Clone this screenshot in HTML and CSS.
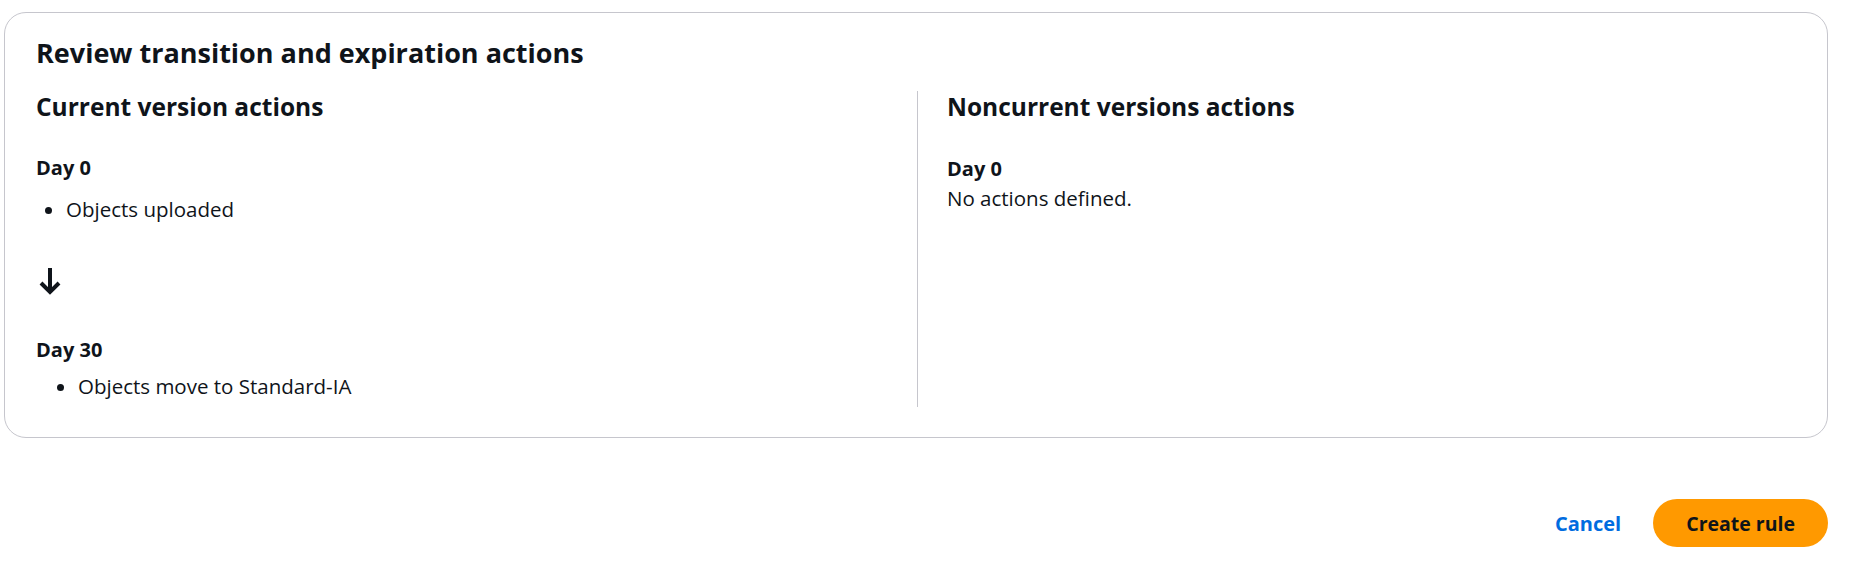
FILE: index.html
```html
<!DOCTYPE html>
<html lang="en">
<head>
<meta charset="utf-8">
<title>Review transition and expiration actions</title>
<link rel="stylesheet" href="styles.css">
</head>
<body>
<div class="page">
  <section class="card">
    <h2 class="card-title">Review transition and expiration actions</h2>
    <div class="columns">
      <div class="col">
        <h3 class="col-title">Current version actions</h3>
        <div class="day">Day 0</div>
        <ul class="list list-first">
          <li>Objects uploaded</li>
        </ul>
        <svg class="arrow" width="22" height="27" viewBox="0 0 22 27" aria-hidden="true">
          <path d="M11 0 V24" stroke="#0f141a" stroke-width="4" fill="none"/>
          <path d="M2 15 L11 24 L20 15" stroke="#0f141a" stroke-width="4" fill="none" stroke-linejoin="miter"/>
        </svg>
        <div class="day day-30">Day 30</div>
        <ul class="list list-second">
          <li>Objects move to Standard-IA</li>
        </ul>
      </div>
      <div class="col col-right">
        <h3 class="col-title">Noncurrent versions actions</h3>
        <div class="day day-right">Day 0</div>
        <p class="none">No actions defined.</p>
      </div>
    </div>
  </section>
  <div class="actions">
    <button class="btn-link" type="button">Cancel</button>
    <button class="btn-primary" type="button">Create rule</button>
  </div>
</div>
</body>
</html>
```
FILE: styles.css
```css
* { box-sizing: border-box; }
html, body {
  margin: 0;
  padding: 0;
  background: #ffffff;
}
body {
  font-family: "Open Sans", "Noto Sans", sans-serif;
  color: #0f141a;
  font-size: 20.5px;
  line-height: 28px;
}
.page {
  padding: 12px 32px 0 4px;
}
.card {
  border: 1px solid #c6c6cd;
  border-radius: 22px;
  padding: 23px 29px 30px 31px;
  background: #fff;
}
.card-title {
  margin: 0;
  font-size: 27px;
  line-height: 34px;
  font-weight: 700;
}
.columns {
  margin-top: 21px;
  display: grid;
  grid-template-columns: 1fr 1fr;
}
.col-right {
  border-left: 1px solid #c6c6cd;
  padding-left: 29px;
}
.col-title {
  margin: 0;
  font-size: 24.5px;
  line-height: 31px;
  font-weight: 700;
}
.day {
  margin-top: 32px;
  font-size: 20px;
  font-weight: 700;
}
.day-right { margin-top: 33px; }
.day-30 { margin-top: 41px; }
.list {
  margin: 0;
  list-style: disc;
}
.list-first {
  margin-top: 13px;
  padding-left: 30px;
}
.list-second {
  margin-top: 8px;
  margin-bottom: 7px;
  padding-left: 42px;
}
.arrow {
  display: block;
  margin-top: 45px;
  margin-left: 3px;
}
.none {
  margin: 1px 0 0;
}
.actions {
  display: flex;
  justify-content: flex-end;
  align-items: center;
  gap: 4px;
  margin-top: 61px;
}
.btn-link {
  font-family: inherit;
  font-size: 20px;
  font-weight: 700;
  color: #006ce0;
  background: none;
  border: none;
  padding: 0 28px;
  height: 48px;
  cursor: pointer;
}
.btn-primary {
  font-family: inherit;
  font-size: 19.5px;
  font-weight: 700;
  color: #0f141a;
  background: #ff9900;
  border: none;
  border-radius: 24px;
  height: 48px;
  padding: 0 33px;
  cursor: pointer;
}
```
